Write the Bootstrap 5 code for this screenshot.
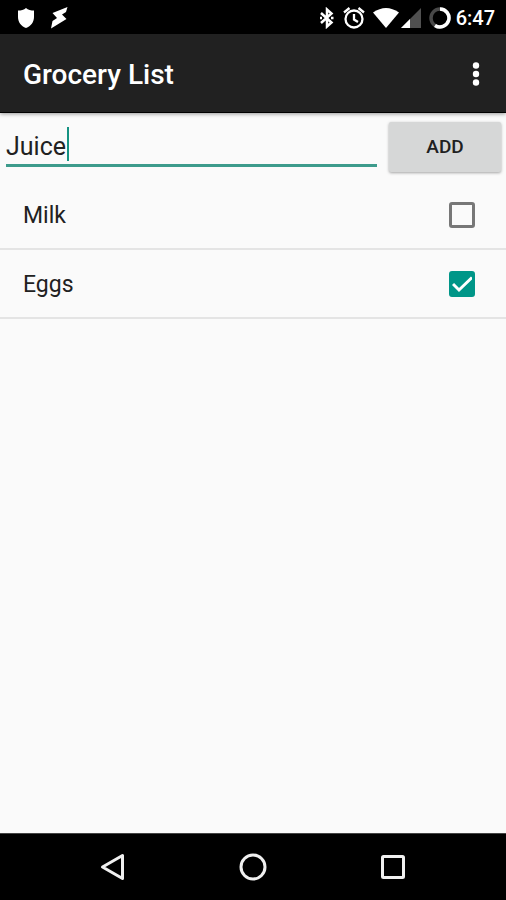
<!DOCTYPE html>
<html lang="en">
<head>
<meta charset="utf-8">
<meta name="viewport" content="width=device-width, initial-scale=1">
<title>Grocery List</title>
<link rel="stylesheet" href="https://cdn.jsdelivr.net/npm/bootstrap@5.3.0/dist/css/bootstrap.min.css">
<style>
  body { font-family: Roboto, "Liberation Sans", sans-serif; background: #fafafa; color: #212121; }
  svg { display: block; flex: none; }
  .status-bar { background: #000; color: #fff; height: 34px; padding: 2px 11px 0 18px; }
  .status-signal { gap: 2px; }
  .status-clock { gap: 5px; }
  .status-time { font-size: 20px; line-height: 24px; font-weight: 500; }
  .app-bar { background: #212121; height: 79px; padding: 4px 8px 0 23px; border-bottom: 1px solid #000; box-shadow: 0 1px 4px rgba(0,0,0,.4); z-index: 1; }
  .app-title { font-size: 28px; line-height: 32px; font-weight: 500; color: #fff; }
  .menu-btn { width: 44px; height: 48px; }
  .entry-form { gap: 12px; padding: 9px 5px 9px 6px; }
  .entry-field { border-bottom: 3px solid #3d9b8c; height: 45px; margin-bottom: 5px; }
  .entry-field input { font-size: 25px; line-height: 32px; color: #212121; outline: 0; height: 42px; padding: 8px 0 2px; }
  .caret { left: 61px; top: 5px; width: 2px; height: 34px; background: #159282; }
  .add-btn { width: 112px; height: 50px; border-radius: 2px; background: #d6d7d7; color: #212121; font-size: 19px; line-height: 24px; font-weight: 500; box-shadow: 0 1px 3px rgba(0,0,0,.35); }
  .add-btn:hover { background: #c8c9c9; }
  .grocery-item { height: 69px; padding: 0 31px 0 23px; border-bottom: 2px solid #e4e4e4; }
  .grocery-item label { font-size: 23px; line-height: 28px; padding-top: 2px; }
  .grocery-item .form-check-input { width: 26px; height: 26px; margin: 0; border: 3px solid #777; border-radius: 3px; background-color: transparent; box-shadow: none; }
  .grocery-item .form-check-input:checked { border-color: #009688; background-color: #009688; background-size: 26px 26px; background-position: center; background-origin: border-box;
    background-image: url("data:image/svg+xml,%3Csvg xmlns='http://www.w3.org/2000/svg' viewBox='0 0 26 26'%3E%3Cpath d='M4 13l6 6L23 6.500' fill='none' stroke='%23fff' stroke-width='3'/%3E%3C/svg%3E"); }
  .nav-keys { background: #000; height: 67px; padding: 0 43px; border-top: 1px solid #444; }
</style>
</head>
<body class="d-flex flex-column min-vh-100">

<div class="status-bar d-flex align-items-center justify-content-between">
  <div class="d-flex align-items-center gap-3">
    <svg width="16" height="20" viewBox="0 0 16 20" fill="#fff" aria-hidden="true"><path d="M8 0C10 2 13 2.500 16 2.500V9c0 5-3 9-8 11C3 18 0 14 0 9V2.500C3 2.500 6 2 8 0z"/></svg>
    <svg width="18" height="22" viewBox="0 0 18 22" fill="#fff" aria-hidden="true"><path d="M17.500 0L2.500 6 7 11 2.500 14 1 21.500 16.500 12 12 7.500 16 5z"/></svg>
  </div>
  <div class="status-clock d-flex align-items-center">
    <div class="d-flex align-items-center gap-2">
      <svg width="16" height="22" viewBox="0 0 16 22" fill="none" stroke="#fff" stroke-width="2.500" aria-hidden="true"><path d="M2 6L12.500 15.500 8 19.500V2.500L12.500 6.500 2 16"/><path d="M1 11h2M12 11h2.500"/></svg>
      <svg width="22" height="22" viewBox="0 0 22 22" fill="none" stroke="#fff" stroke-width="2.300" aria-hidden="true"><circle cx="11" cy="12" r="8.500"/><path d="M1 5.500l5.500-4.500M21 5.500l-5.500-4.500M11 7v5.500l4 2.500"/></svg>
      <div class="status-signal d-flex align-items-center">
        <svg width="26" height="20" viewBox="0 0 26 20" fill="#fff" aria-hidden="true"><path d="M0 4.500Q13-4.500 26 4.500L13 20z"/></svg>
        <svg width="20" height="20" viewBox="0 0 20 20" aria-hidden="true"><path d="M0 20L20 0v20z" fill="#505050"/><path d="M0 20L9 11v9z" fill="#fff"/></svg>
      </div>
      <svg width="22" height="22" viewBox="0 0 22 22" fill="none" stroke-width="3.500" aria-hidden="true"><circle cx="11" cy="11" r="9" stroke="#484848"/><path d="M11 2a9 9 0 1 1-5 16.500" stroke="#fff"/></svg>
    </div>
    <span class="status-time">6:47</span>
  </div>
</div>

<header class="app-bar d-flex align-items-center justify-content-between position-relative">
  <h1 class="app-title mb-0">Grocery List</h1>
  <button type="button" class="menu-btn btn p-0 border-0 d-flex align-items-center justify-content-center" aria-label="More options">
    <svg width="8" height="26" viewBox="0 0 8 26" fill="#fff" aria-hidden="true"><circle cx="4" cy="3.500" r="3.200"/><circle cx="4" cy="12" r="3.200"/><circle cx="4" cy="20.500" r="3.200"/></svg>
  </button>
</header>

<main class="flex-grow-1">
  <form class="entry-form d-flex align-items-end" onsubmit="return false">
    <div class="entry-field position-relative flex-grow-1">
      <input type="text" class="w-100 border-0 bg-transparent" value="Juice" aria-label="New item" autocomplete="off" spellcheck="false">
      <span class="caret position-absolute"></span>
    </div>
    <button type="submit" class="add-btn btn border-0 p-0">ADD</button>
  </form>
  <ul class="list-unstyled mb-0">
    <li class="grocery-item d-flex align-items-center justify-content-between">
      <label for="milk">Milk</label>
      <input class="form-check-input" type="checkbox" id="milk">
    </li>
    <li class="grocery-item d-flex align-items-center justify-content-between">
      <label for="eggs">Eggs</label>
      <input class="form-check-input" type="checkbox" id="eggs" checked>
    </li>
  </ul>
</main>

<nav class="nav-keys d-flex align-items-center" aria-label="System navigation">
  <button type="button" class="btn border-0 p-0 flex-fill d-flex justify-content-center" aria-label="Back">
    <svg width="28" height="28" viewBox="0 0 28 28" fill="none" stroke="#f0f0f0" stroke-width="3" stroke-linejoin="round" aria-hidden="true"><path d="M3.500 14L23.500 2.500v23z"/></svg>
  </button>
  <button type="button" class="btn border-0 p-0 flex-fill d-flex justify-content-center" aria-label="Home">
    <svg width="28" height="28" viewBox="0 0 28 28" fill="none" stroke="#f0f0f0" stroke-width="3" aria-hidden="true"><circle cx="14" cy="14" r="12"/></svg>
  </button>
  <button type="button" class="btn border-0 p-0 flex-fill d-flex justify-content-center" aria-label="Recent apps">
    <svg width="28" height="28" viewBox="0 0 28 28" fill="none" stroke="#f0f0f0" stroke-width="3" aria-hidden="true"><rect x="3.500" y="3.500" width="21" height="21" rx="1"/></svg>
  </button>
</nav>

<script src="https://cdn.jsdelivr.net/npm/bootstrap@5.3.0/dist/js/bootstrap.bundle.min.js"></script>
</body>
</html>
